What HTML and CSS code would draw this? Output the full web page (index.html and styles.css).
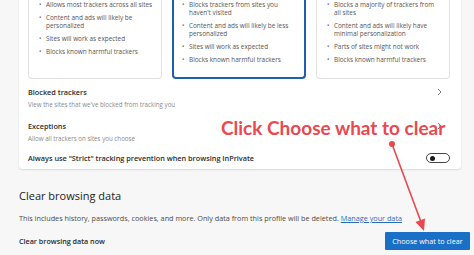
FILE: index.html
```html
<!DOCTYPE html>
<html lang="en">
<head>
  <meta charset="UTF-8">
  <meta name="viewport" content="width=device-width, initial-scale=1.0">
  <title>Tracking prevention</title>
  <link rel="stylesheet" href="styles.css">
</head>
<body>
  <div class="page">
    <div class="card">
      <div class="modes">
        <div class="mode">
          <ul>
            <li>Allows most trackers across all sites</li>
            <li>Content and ads will likely be personalized</li>
            <li>Sites will work as expected</li>
            <li>Blocks known harmful trackers</li>
          </ul>
        </div>
        <div class="mode selected">
          <ul>
            <li>Blocks trackers from sites you haven't visited</li>
            <li>Content and ads will likely be less personalized</li>
            <li>Sites will work as expected</li>
            <li>Blocks known harmful trackers</li>
          </ul>
        </div>
        <div class="mode">
          <ul>
            <li>Blocks a majority of trackers from all sites</li>
            <li>Content and ads will likely have minimal personalization</li>
            <li>Parts of sites might not work</li>
            <li>Blocks known harmful trackers</li>
          </ul>
        </div>
      </div>

      <div class="row">
        <div class="row-text">
          <div class="row-title">Blocked trackers</div>
          <div class="row-sub">View the sites that we've blocked from tracking you</div>
        </div>
        <svg class="chevron" viewBox="0 0 5 8"><polyline points="1,1 4,4 1,7"/></svg>
      </div>
      <div class="row">
        <div class="row-text">
          <div class="row-title">Exceptions</div>
          <div class="row-sub">Allow all trackers on sites you choose</div>
        </div>
        <svg class="chevron" viewBox="0 0 5 8"><polyline points="1,1 4,4 1,7"/></svg>
      </div>
      <div class="row last">
        <div class="row-title">Always use "Strict" tracking prevention when browsing InPrivate</div>
        <label class="toggle"><span class="knob"></span></label>
      </div>
    </div>

    <div class="clear">
      <h2>Clear browsing data</h2>
      <p>This includes history, passwords, cookies, and more. Only data from this profile will be deleted. <a href="#">Manage your data</a></p>
      <div class="clear-row">
        <span class="clear-label">Clear browsing data now</span>
        <button class="btn">Choose what to clear</button>
      </div>
    </div>

    <!-- annotation -->
    <div class="note">Click Choose what to clear</div>
    <svg class="arrow" viewBox="0 0 474 255">
      <circle cx="392" cy="144" r="3"/>
      <line x1="392" y1="144" x2="421" y2="222"/>
      <polygon points="424,231 425,218.5 415.5,222"/>
    </svg>
  </div>
</body>
</html>
```

FILE: styles.css
```css
* {
  box-sizing: border-box;
}

body {
  margin: 0;
  background-color: #f7f7f7;
  font-family: "Open Sans", Arial, sans-serif;
  color: #1b1b1b;
  overflow: hidden;
}

.page {
  position: relative;
  width: 474px;
  height: 255px;
}

.card {
  margin-left: 19px;
  width: 442px;
  height: 169px;
  background-color: #ffffff;
  border-radius: 0 0 4px 4px;
  box-shadow: 0 1px 2px rgba(0, 0, 0, 0.12);
  padding: 0 11px 0 9px;
}

.modes {
  display: grid;
  grid-template-columns: repeat(3, 1fr);
  gap: 10px;
  height: 78px;
}

.mode {
  border: 1px solid #e1e1e1;
  border-top: none;
  border-radius: 0 0 4px 4px;
  padding: 1px 8px 0 0;
}

.mode.selected {
  border: 2px solid #1f5fad;
  border-top: none;
  padding-left: 0;
  height: 79px;
}

.mode ul {
  list-style: none;
  margin: 0;
  padding: 0 0 0 17px;
}

.mode.selected ul {
  padding-left: 15px;
}

.mode li {
  position: relative;
  font-size: 6.4px;
  line-height: 8px;
  color: #555555;
  margin-bottom: 5px;
}

.mode li:before {
  content: "\2022";
  position: absolute;
  left: -7px;
  color: #777777;
}

.row {
  display: flex;
  align-items: flex-start;
  justify-content: space-between;
  padding-right: 8px;
}

.modes + .row {
  margin-top: 9px;
}

.row + .row {
  margin-top: 11px;
}

.row-title {
  font-size: 7.3px;
  line-height: 10px;
  font-weight: 600;
  color: #2b2b2b;
}

.row-sub {
  font-size: 6.2px;
  line-height: 10px;
  margin-top: 3px;
  color: #8a8a8a;
}

.row.last {
  align-items: center;
  margin-top: 9px;
  padding-right: 0;
}

.chevron {
  width: 5px;
  height: 8px;
  margin-top: 1px;
  fill: none;
  stroke: #6b6b6b;
  stroke-width: 0.9;
}

.toggle {
  display: flex;
  align-items: center;
  width: 24px;
  height: 10px;
  border: 1px solid #444444;
  border-radius: 5px;
  padding-left: 3px;
}

.knob {
  width: 5px;
  height: 5px;
  border-radius: 50%;
  background-color: #1b1b1b;
}

.clear {
  padding: 19px 4px 0 19px;
}

.clear h2 {
  margin: 0;
  font-size: 11px;
  line-height: 16px;
  font-weight: 500;
  color: #222222;
}

.clear p {
  margin: 9px 0 0;
  font-size: 7.25px;
  line-height: 10px;
  color: #4a4a4a;
}

.clear p a {
  color: #2a6bb8;
}

.clear-row {
  display: flex;
  align-items: center;
  justify-content: space-between;
  margin-top: 9px;
}

.clear-label {
  font-size: 7.2px;
  font-weight: 600;
  color: #2b2b2b;
}

.btn {
  width: 85px;
  height: 18px;
  border: none;
  border-radius: 1px;
  background-color: #1a6fc6;
  color: #ffffff;
  font-family: "Open Sans", Arial, sans-serif;
  font-size: 7.2px;
  padding: 0;
}

.note {
  position: absolute;
  left: 221px;
  top: 115px;
  font-family: Lato, "Open Sans", sans-serif;
  font-weight: 700;
  font-size: 19px;
  line-height: 26px;
  color: #e9484f;
  white-space: nowrap;
}

.arrow {
  position: absolute;
  left: 0;
  top: 0;
  width: 474px;
  height: 255px;
  pointer-events: none;
  fill: #e9484f;
  stroke: #e9484f;
}

.arrow line {
  stroke-width: 1.6;
}

.arrow polygon,
.arrow circle {
  stroke: none;
}
```
